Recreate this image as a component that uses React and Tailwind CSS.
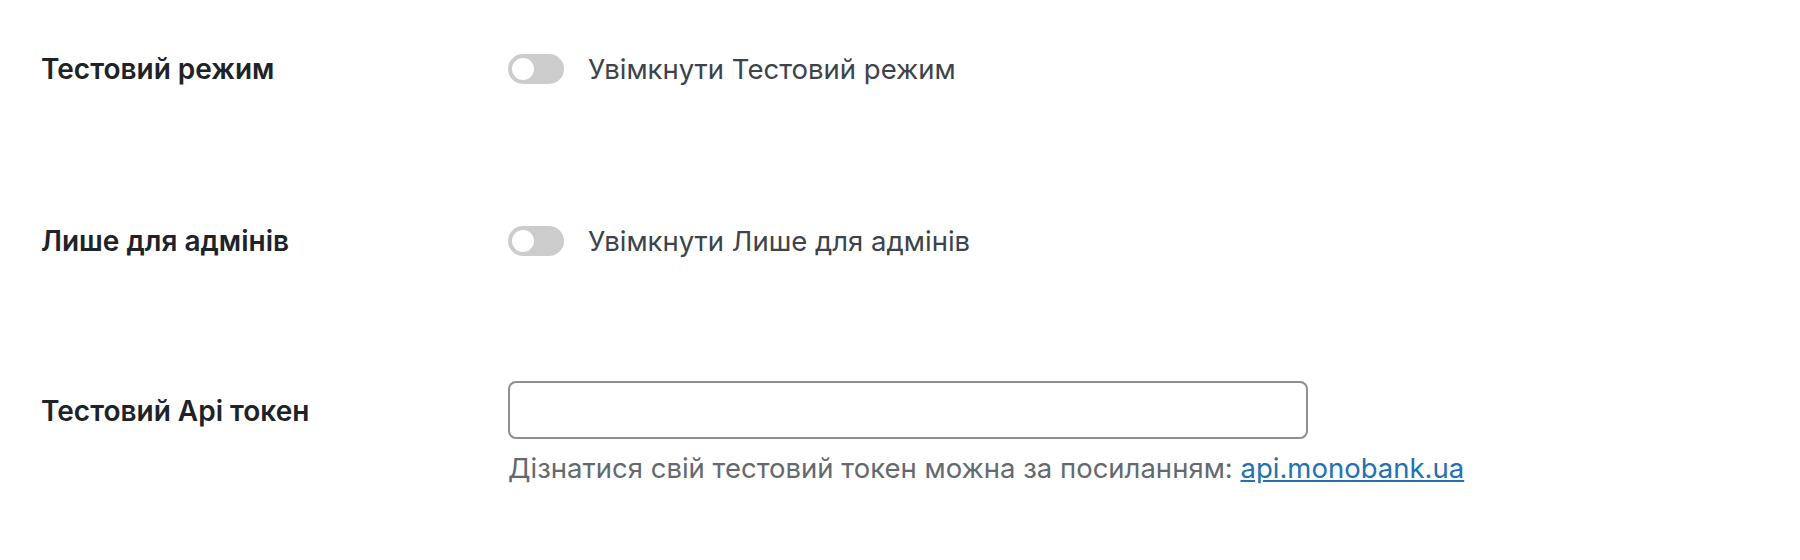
import { useState } from "react";

// Settings rows like the WooCommerce payment gateway screen
function Toggle({ checked, onChange }) {
  return (
    <button
      type="button"
      onClick={() => onChange(!checked)}
      className={
        "relative w-[56px] h-[30px] rounded-full shrink-0 " +
        (checked ? "bg-[#2271b1]" : "bg-[#cccccc]")
      }
    >
      <span
        className={
          "absolute top-[4px] w-[22px] h-[22px] rounded-full bg-white " +
          (checked ? "left-[30px]" : "left-[4px]")
        }
      />
    </button>
  );
}

function ToggleRow({ label, text, className }) {
  const [on, setOn] = useState(false);
  return (
    <div className={"flex items-center " + className}>
      <div className="w-[467px] shrink-0 text-[28px] leading-[36px] font-semibold text-[#1d2327]">
        {label}
      </div>
      <div className="flex items-center gap-[24px]">
        <Toggle checked={on} onChange={setOn} />
        <span className="text-[27.5px] leading-[36px] text-[#3c434a]">{text}</span>
      </div>
    </div>
  );
}

export default function App() {
  const [token, setToken] = useState("");

  return (
    <div className="min-h-[560px] bg-white pl-[41px] pt-[51px] font-['Inter',sans-serif]">
      <ToggleRow label="Тестовий режим" text="Увімкнути Тестовий режим" />
      <ToggleRow label="Лише для адмінів" text="Увімкнути Лише для адмінів" className="mt-[136px]" />

      <div className="flex items-start mt-[122px]">
        <div className="w-[467px] shrink-0 mt-[12px] text-[28px] leading-[36px] font-semibold text-[#1d2327]">
          Тестовий Api токен
        </div>
        <div>
          <input
            type="text"
            value={token}
            onChange={(e) => setToken(e.target.value)}
            className="block w-[800px] h-[58px] border-2 border-[#8c8f94] rounded-[8px] px-3 text-[27px] outline-none"
          />
          <p className="mt-[11px] text-[27.5px] leading-[36px] text-[#646970]">
            Дізнатися свій тестовий токен можна за посиланням:{" "}
            <a href="#" className="text-[#2271b1] underline">
              api.monobank.ua
            </a>
          </p>
        </div>
      </div>
    </div>
  );
}
